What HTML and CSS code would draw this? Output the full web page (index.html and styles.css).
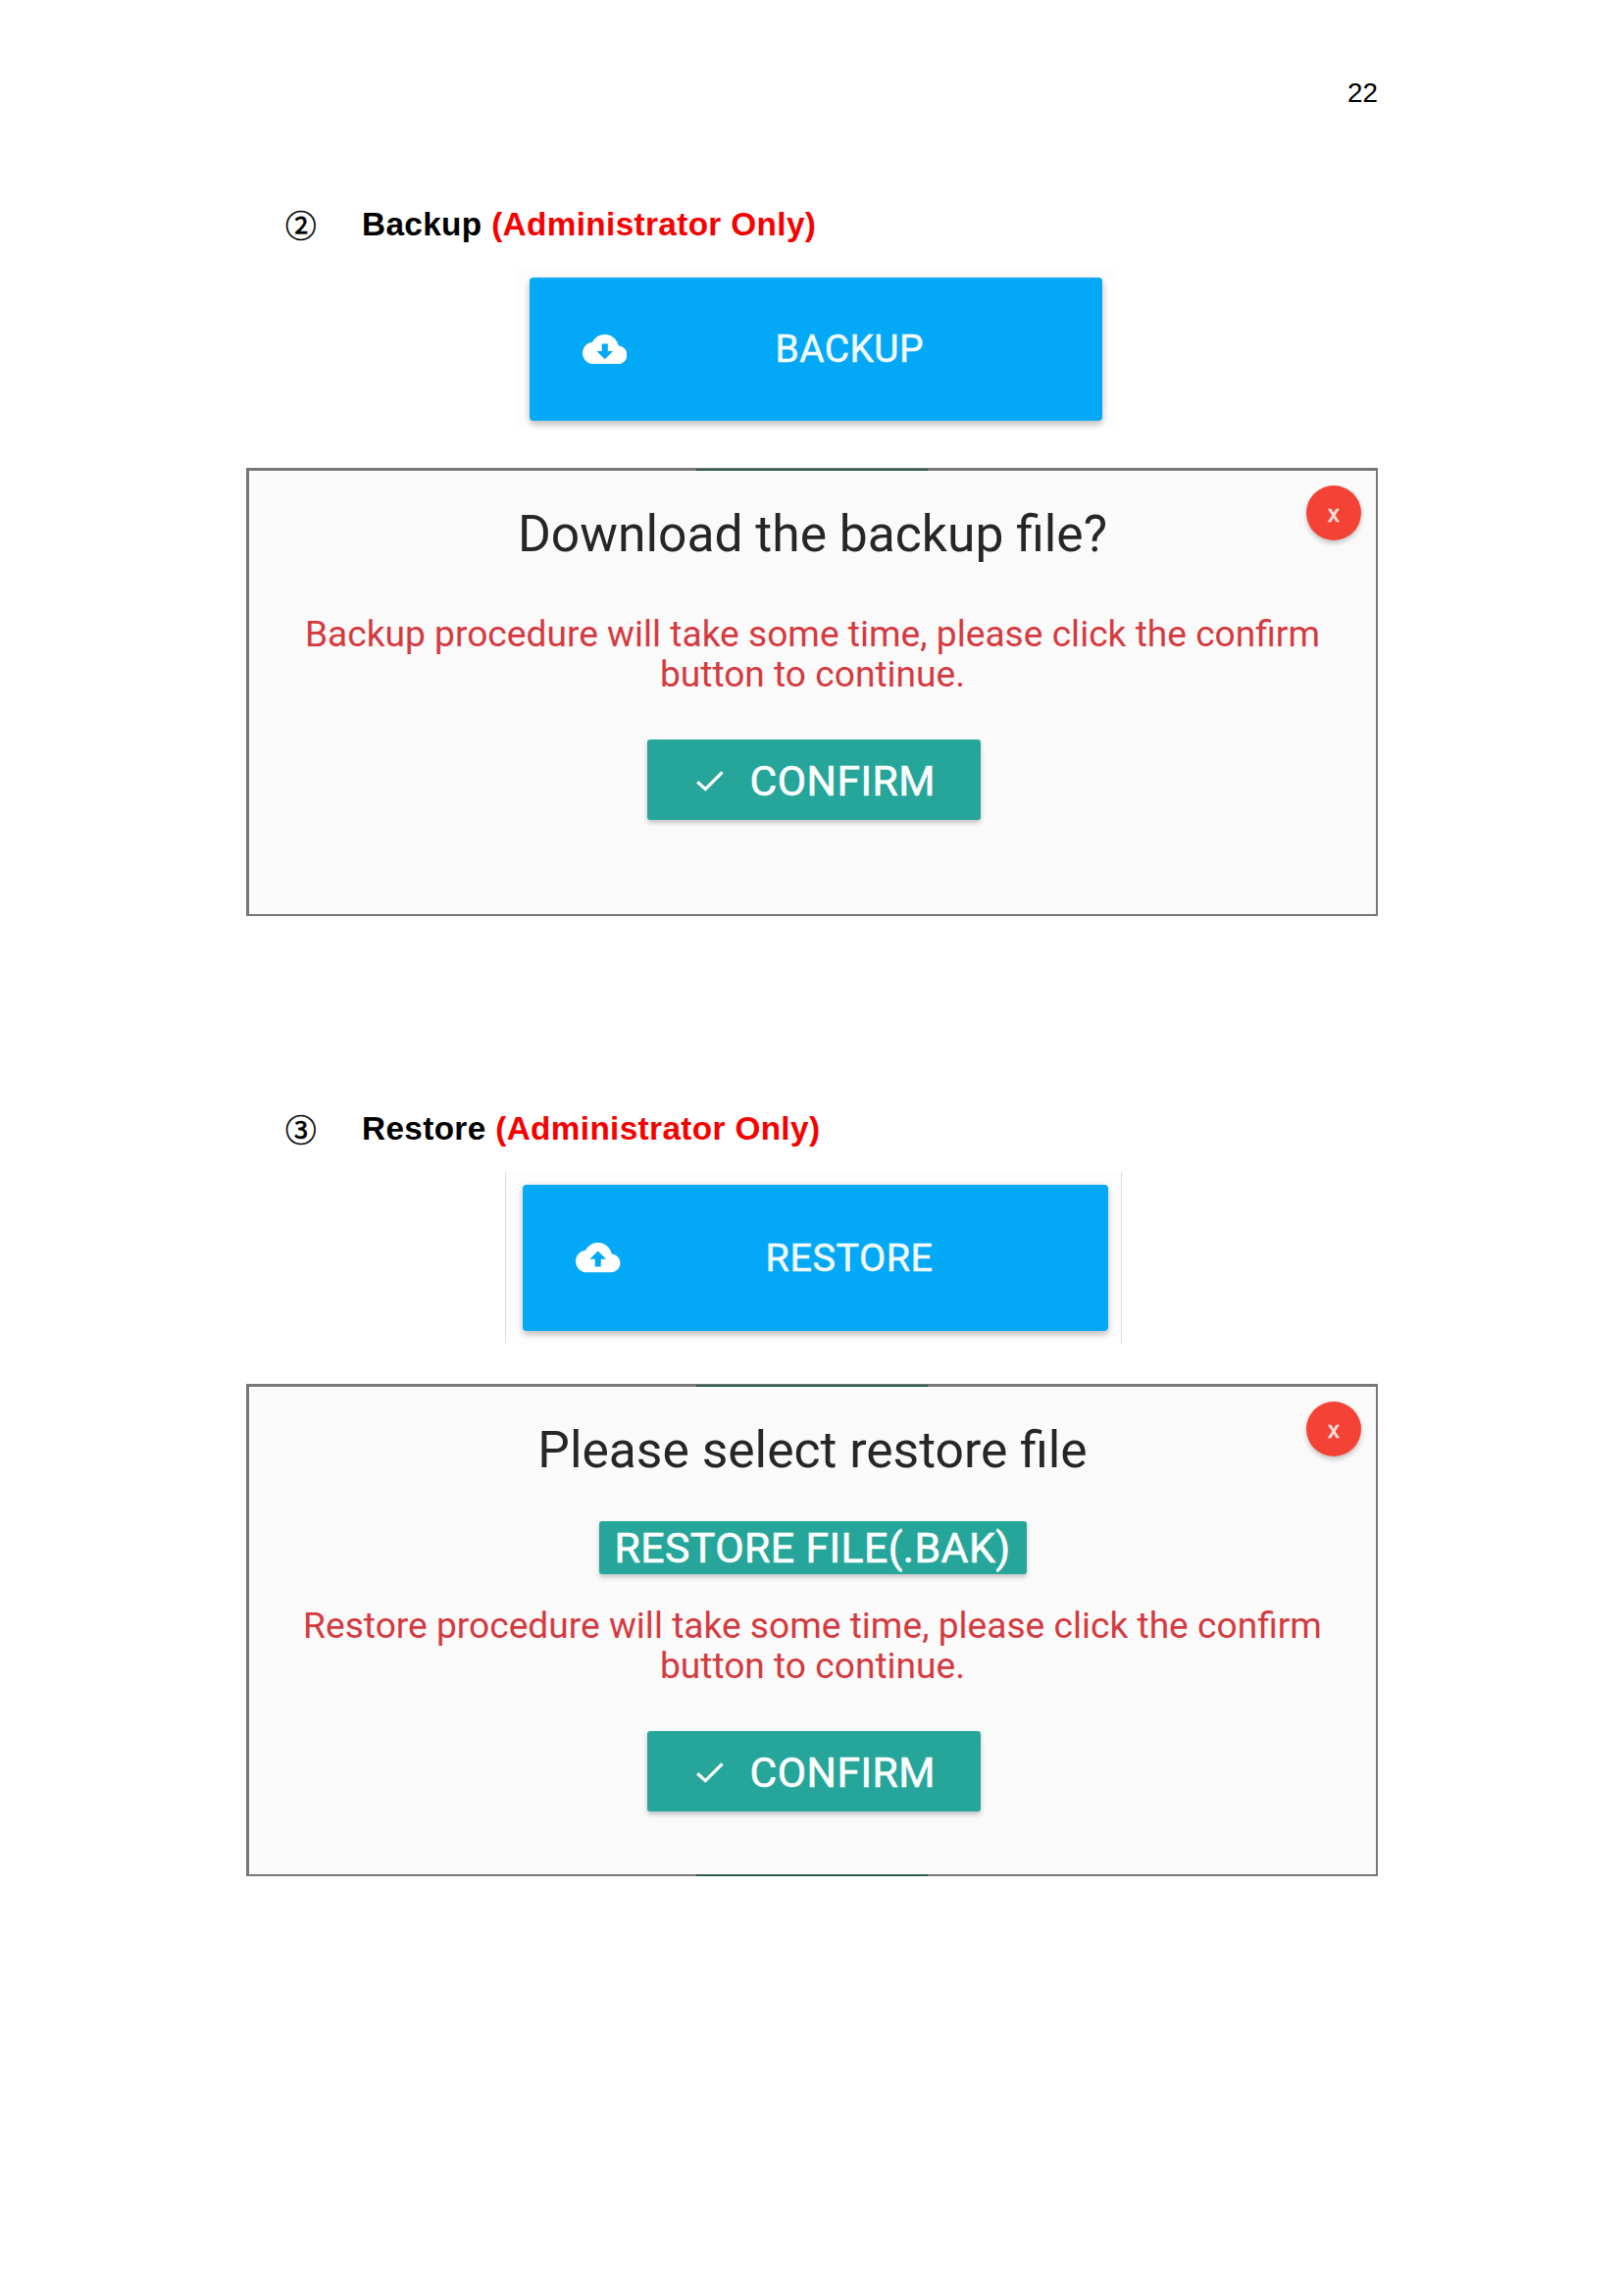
FILE: index.html
```html
<!DOCTYPE html>
<html lang="en">
<head>
<meta charset="utf-8">
<title>Backup and Restore</title>
<link rel="stylesheet" href="styles.css">
</head>
<body>
<main class="page">
  <header class="page-number">22</header>

  <section class="step">
    <h2 class="heading"><span class="marker">②</span><span class="heading-text">Backup <em>(Administrator Only)</em></span></h2>
    <div class="figure figure-backup">
      <div class="action">
        <svg class="cloud" viewBox="0 4 24 16"><path fill="#fff" fill-rule="evenodd" d="M19.35 10.04C18.67 6.59 15.64 4 12 4 9.11 4 6.6 5.64 5.35 8.04 2.34 8.36 0 10.91 0 14c0 3.31 2.69 6 6 6h13c2.76 0 5-2.24 5-5 0-2.64-2.05-4.78-4.65-4.96zM16.4 13L12 17.4 7.6 13h2.8V9h3.2v4z"/></svg>
        <span class="action-label">BACKUP</span>
      </div>
    </div>
    <div class="dialog dialog-backup">
      <span class="accent accent-top"></span>
      <span class="close">x</span>
      <h3 class="title">Download the backup file?</h3>
      <p class="note">Backup procedure will take some time, please click the confirm<br>button to continue.</p>
      <div class="confirm">
        <svg class="check" viewBox="0 0 28 21"><path fill="none" stroke="#fff" stroke-width="3.2" d="M1.2 11.2L9.3 18.6 26.6 1.3"/></svg>
        <span>CONFIRM</span>
      </div>
    </div>
  </section>

  <section class="step step-restore">
    <h2 class="heading"><span class="marker">③</span><span class="heading-text">Restore <em>(Administrator Only)</em></span></h2>
    <div class="figure figure-restore">
      <div class="action">
        <svg class="cloud" viewBox="0 4 24 16"><path fill="#fff" fill-rule="evenodd" d="M19.35 10.04C18.67 6.59 15.64 4 12 4 9.11 4 6.6 5.64 5.35 8.04 2.34 8.36 0 10.91 0 14c0 3.31 2.69 6 6 6h13c2.76 0 5-2.24 5-5 0-2.64-2.05-4.78-4.65-4.96zM13.6 12.9v4.1h-3.2v-4.1H7.6L12 8.5l4.4 4.4z"/></svg>
        <span class="action-label">RESTORE</span>
      </div>
    </div>
    <div class="dialog dialog-restore">
      <span class="accent accent-top"></span>
      <span class="accent accent-bottom"></span>
      <span class="close">x</span>
      <h3 class="title">Please select restore file</h3>
      <div class="file-button">RESTORE FILE(.BAK)</div>
      <p class="note">Restore procedure will take some time, please click the confirm<br>button to continue.</p>
      <div class="confirm">
        <svg class="check" viewBox="0 0 28 21"><path fill="none" stroke="#fff" stroke-width="3.2" d="M1.2 11.2L9.3 18.6 26.6 1.3"/></svg>
        <span>CONFIRM</span>
      </div>
    </div>
  </section>
</main>
</body>
</html>
```
FILE: styles.css
```css
* {
  box-sizing: border-box;
}

body {
  margin: 0;
  background: #fff;
  color: #000;
}

.page {
  width: 1656px;
  height: 2341px;
  padding: 75px 251px 0;
  font-family: "Liberation Sans", Arial, sans-serif;
  overflow: hidden;
}

.page-number {
  height: 130px;
  text-align: right;
  font-size: 27.8px;
  line-height: 40px;
}

.heading {
  display: flex;
  height: 48px;
  margin: 0;
  padding-left: 40px;
  font-size: 33.3px;
  font-weight: 700;
  line-height: 48px;
  letter-spacing: 0.37px;
  white-space: nowrap;
}

.heading em {
  color: #f60000;
  font-style: normal;
}

.marker {
  width: 78px;
  font-family: "Noto Sans CJK JP", sans-serif;
  font-size: 31.6px;
  font-weight: 400;
  line-height: 47px;
  letter-spacing: 0;
  -webkit-text-stroke: 0.6px #000;
}

.step-restore {
  margin-top: 193px;
}

.figure {
  font-family: Roboto, sans-serif;
  background: #fdfdfd;
}

.figure-backup {
  width: 612px;
  height: 166px;
  margin: 19px 0 0 273px;
  padding: 11px 0 0 16px;
}

.figure-restore {
  width: 629px;
  height: 175px;
  margin: 20px 0 0 264px;
  padding: 13px 0 0 17px;
  border: solid #dcdcdc;
  border-width: 0 1px;
}

.action {
  display: flex;
  align-items: center;
  border-radius: 4px;
  background: #03a9f6;
  color: #f4fbff;
  font-size: 38.8px;
  letter-spacing: 0.5px;
  -webkit-text-stroke: 0.5px #f4fbff;
  box-shadow: 0 4px 6px rgba(0, 0, 0, 0.2), 0 1px 8px rgba(0, 0, 0, 0.08);
}

.figure-backup .action {
  width: 584px;
  height: 146px;
  padding-left: 53.5px;
}

.figure-restore .action {
  width: 597px;
  height: 149px;
  padding-left: 54px;
}

.cloud {
  width: 45.5px;
  height: 30.3px;
}

.action-label {
  margin-left: 151.5px;
  line-height: 46px;
}

.figure-restore .action-label {
  margin-left: 148px;
  font-size: 39.6px;
}

.dialog {
  position: relative;
  display: flex;
  flex-direction: column;
  align-items: center;
  width: 1154px;
  border: solid #777;
  border-width: 3px 2px 2px 3px;
  background: #fafafa;
  font-family: Roboto, sans-serif;
}

.dialog-backup {
  height: 457px;
  margin-top: 39px;
  padding-top: 34px;
}

.dialog-restore {
  height: 502px;
  margin-top: 41px;
  padding-top: 34px;
}

.accent {
  position: absolute;
  left: 456px;
  width: 236px;
  height: 2px;
  background: #2f5b50;
}

.accent-top {
  top: -2px;
}

.accent-bottom {
  bottom: -2px;
}

.close {
  position: absolute;
  top: 15px;
  right: 15px;
  width: 56px;
  height: 56px;
  border-radius: 50%;
  background: #f44336;
  color: #ffe4e0;
  font-size: 24px;
  line-height: 58px;
  text-align: center;
  -webkit-text-stroke: 0.5px #ffe4e0;
  box-shadow: 0 3px 5px rgba(0, 0, 0, 0.22);
}

.title {
  margin: 0;
  color: #262626;
  font-size: 51.6px;
  font-weight: 400;
  line-height: 61px;
  white-space: nowrap;
}

.note {
  margin: 52px 0 0;
  color: #d43a40;
  font-size: 37.15px;
  line-height: 40.7px;
  text-align: center;
  white-space: nowrap;
}

.file-button {
  width: 436px;
  height: 54px;
  margin-top: 42px;
  border-radius: 3px;
  background: #26a69a;
  color: #fff;
  font-size: 42.8px;
  line-height: 54px;
  letter-spacing: 0.4px;
  text-align: center;
  white-space: nowrap;
  -webkit-text-stroke: 0.6px #fff;
  box-shadow: 0 3px 5px rgba(0, 0, 0, 0.22);
}

.file-button + .note {
  margin-top: 33px;
}

.confirm {
  display: flex;
  align-items: center;
  width: 340px;
  height: 82px;
  margin: 46px 0 0 3px;
  padding: 2px 0 0 50px;
  border-radius: 3px;
  background: #26a69a;
  color: #fff;
  font-size: 42.6px;
  letter-spacing: 0.5px;
  -webkit-text-stroke: 0.6px #fff;
  box-shadow: 0 3px 5px rgba(0, 0, 0, 0.22);
}

.check {
  width: 28px;
  height: 21px;
  margin-right: 26.5px;
}
```
